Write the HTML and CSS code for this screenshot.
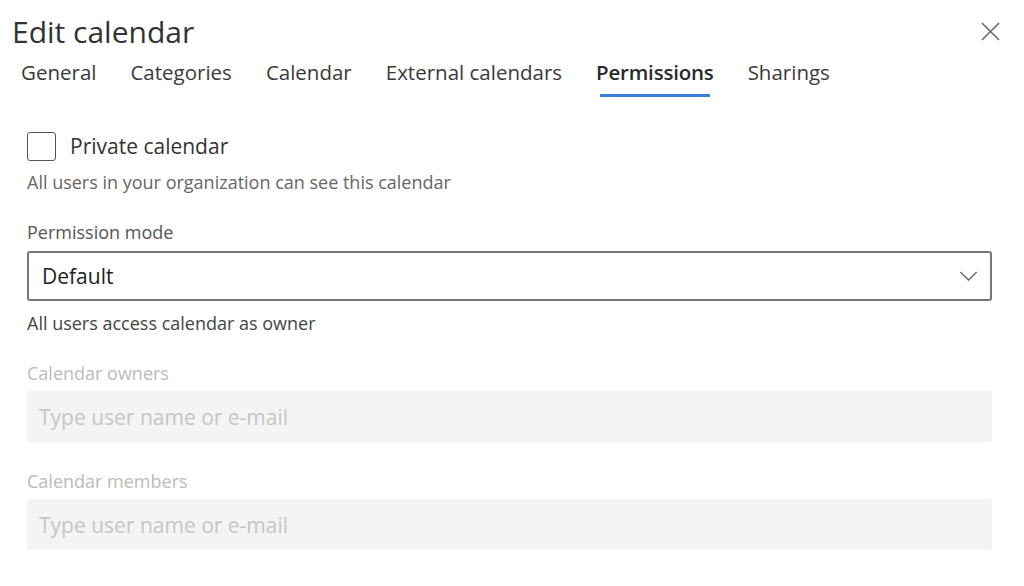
FILE: index.html
```html
<!DOCTYPE html>
<html lang="en">
<head>
  <meta charset="UTF-8" />
  <meta name="viewport" content="width=device-width, initial-scale=1.0" />
  <title>Edit calendar</title>
  <link rel="stylesheet" href="styles.css">
</head>
<body>

<div class="dialog">
  <div class="header">
    <h1>Edit calendar</h1>
    <button class="close-btn" type="button" aria-label="Close">
      <svg viewBox="0 0 20 20" class="close-icon"><path d="M1 1L19 19M19 1L1 19"/></svg>
    </button>
  </div>

  <!-- Tabs -->
  <nav class="tabs">
    <span class="tab">General</span>
    <span class="tab">Categories</span>
    <span class="tab">Calendar</span>
    <span class="tab">External calendars</span>
    <span class="tab active">Permissions</span>
    <span class="tab">Sharings</span>
  </nav>

  <div class="content">
    <label class="check-row">
      <span class="checkbox"></span>
      <span class="check-label">Private calendar</span>
    </label>
    <div class="hint">All users in your organization can see this calendar</div>

    <div class="field-label">Permission mode</div>
    <div class="select">
      <span>Default</span>
      <svg viewBox="0 0 20 11" class="chevron"><path d="M1 1L10 10L19 1"/></svg>
    </div>
    <div class="hint dark">All users access calendar as owner</div>

    <div class="field-label disabled">Calendar owners</div>
    <input class="text-input" type="text" placeholder="Type user name or e-mail" disabled>

    <div class="field-label disabled">Calendar members</div>
    <input class="text-input" type="text" placeholder="Type user name or e-mail" disabled>
  </div>
</div>

</body>
</html>
```

FILE: styles.css
```css
body {
  font-family: 'Open Sans', 'Noto Sans', sans-serif;
  background: #fff;
  color: #333;
  margin: 0;
}

.dialog {
  padding: 14px 24px 0 12px;
}

.header {
  display: flex;
  justify-content: space-between;
  align-items: flex-start;
}

h1 {
  margin: 0;
  font-size: 30px;
  font-weight: 400;
  line-height: 36px;
  color: #333;
}

.close-btn {
  background: transparent;
  border: none;
  padding: 0;
  margin-top: 8px;
  width: 19px;
  height: 19px;
  cursor: pointer;
}

.close-icon {
  width: 100%;
  height: 100%;
  stroke: #666;
  stroke-width: 1.6;
  fill: none;
}

/* Tabs */
.tabs {
  display: flex;
  gap: 34px;
  margin-top: 8px;
  padding-left: 9px;
}

.tab {
  position: relative;
  font-size: 20.5px;
  line-height: 28px;
  padding-bottom: 11px;
  color: #3a3a3a;
  cursor: pointer;
}

.tab.active {
  font-weight: 600;
  color: #2a2a2a;
  letter-spacing: -0.2px;
}

.tab.active::after {
  content: "";
  position: absolute;
  left: 4px;
  right: 4px;
  bottom: 0;
  height: 3px;
  background: #3b7ddd;
}

/* Form */
.content {
  padding: 34px 8px 0 15px;
}

.check-row {
  display: flex;
  align-items: center;
  gap: 14px;
}

.checkbox {
  width: 27px;
  height: 27px;
  border: 1.5px solid #555;
  border-radius: 3px;
}

.check-label {
  font-size: 21px;
  line-height: 30px;
  color: #333;
}

.hint {
  margin-top: 10px;
  font-size: 18px;
  line-height: 22px;
  color: #666;
}

.hint.dark {
  margin-top: 11px;
  color: #444;
}

.field-label {
  margin-top: 28px;
  margin-bottom: 8px;
  font-size: 18px;
  line-height: 22px;
  color: #555;
}

.field-label.disabled {
  color: #bbb;
  margin-bottom: 7px;
}

.select {
  display: flex;
  align-items: center;
  justify-content: space-between;
  height: 46px;
  padding: 0 12px 0 13px;
  border: 2px solid #767676;
  border-radius: 3px;
  font-size: 21px;
  color: #222;
}

.chevron {
  width: 19px;
  height: 10px;
  stroke: #666;
  stroke-width: 1.5;
  fill: none;
}

.text-input {
  display: block;
  box-sizing: border-box;
  width: 100%;
  height: 51px;
  padding: 0 12px;
  border: none;
  border-radius: 3px;
  background: #f4f4f4;
  font-family: inherit;
  font-size: 21px;
}

.text-input::placeholder {
  color: #c6c6c6;
}
```
